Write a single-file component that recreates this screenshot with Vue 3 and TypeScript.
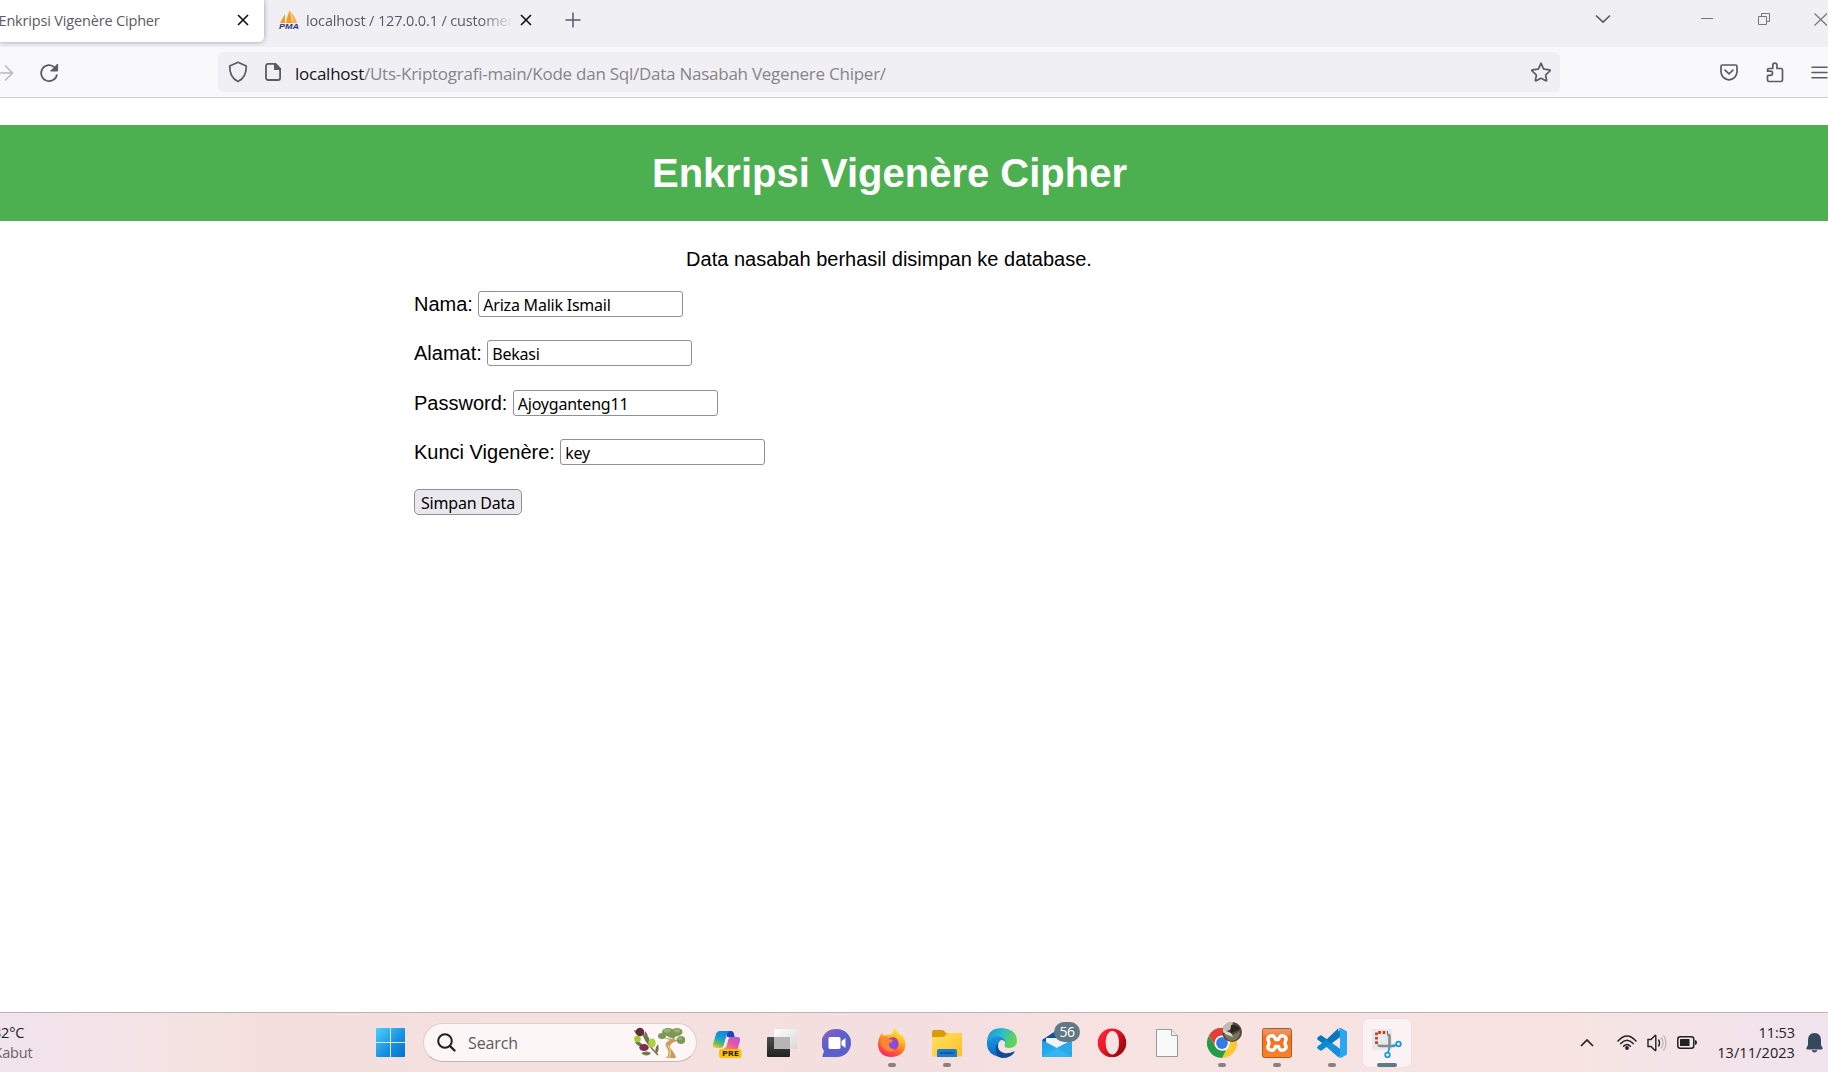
<script setup lang="ts">
import { ref } from 'vue'

interface Field {
  id: string
  label: string
  value: string
}

const fields = ref<Field[]>([
  { id: 'nama', label: 'Nama:', value: 'Ariza Malik Ismail' },
  { id: 'alamat', label: 'Alamat:', value: 'Bekasi' },
  { id: 'password', label: 'Password:', value: 'Ajoyganteng11' },
  { id: 'kunci', label: 'Kunci Vigenère:', value: 'key' },
])
</script>

<template>
  <div class="screen">
    <header class="tabs">
      <div class="tab active">
        <span class="tab-title first">Enkripsi Vigenère Cipher</span>
        <svg class="x" width="12" height="12" viewBox="0 0 12 12"><path d="M1 1l10 10M11 1L1 11" /></svg>
      </div>
      <div class="tab second-tab">
        <svg class="pma" width="21" height="20" viewBox="0 0 21 20">
          <path d="M1 13L6 4v9zM7 13c1-5 2-9 4-13l2 13z" fill="#f89c1c" />
          <path d="M13 13c1-3 0-7-1-11 3 3 5 7 6 11z" fill="#fbb24a" />
          <text x="0" y="19.3" textLength="20" lengthAdjust="spacingAndGlyphs">PMA</text>
        </svg>
        <span class="tab-title second">localhost / 127.0.0.1 / customer_</span>
        <svg class="x" width="12" height="12" viewBox="0 0 12 12"><path d="M1 1l10 10M11 1L1 11" /></svg>
      </div>
      <svg class="plus" width="16" height="16" viewBox="0 0 16 16"><path d="M8 .5v15M.5 8h15" /></svg>
      <div class="window-buttons">
        <svg width="16" height="10" viewBox="0 0 16 10"><path d="M1 1.500l7 6.500 7-6.500" stroke="#5b5b66" stroke-width="1.7" /></svg>
        <svg class="min" width="12" height="12" viewBox="0 0 12 12"><path d="M0 5.500h12" /></svg>
        <svg class="restore" width="12" height="12" viewBox="0 0 12 12"><path d="M.5 3.500h8v8h-8zM3.500 3.500V.5h8v8h-3" /></svg>
        <svg class="close" width="14" height="13" viewBox="0 0 14 13"><path d="M.5.5l12.500 12M13 .5L.5 12.500" stroke-width="1.200" /></svg>
      </div>
    </header>

    <nav class="toolbar">
      <svg class="forward" width="14" height="18" viewBox="0 0 14 18"><path d="M0 9h12.500M5 1.500L12.500 9 5 16.500" stroke="#b9b9bf" stroke-width="1.500" /></svg>
      <svg class="reload" width="20" height="20" viewBox="0 0 20 20"><path d="M18 11.500A8 8 0 1 1 15.800 4.500" stroke-width="1.700" /><path d="M18.600 1v7h-7z" fill="#5b5b66" /></svg>
      <div class="address">
        <svg width="20" height="22" viewBox="0 0 20 22"><path d="M10 1.300L18.300 5C18.500 11.500 16 17.500 10 20.600 4 17.500 1.500 11.500 1.700 5z" stroke-width="1.700" stroke-linejoin="round" /></svg>
        <svg class="page" width="16" height="18" viewBox="0 0 16 18"><path d="M3 .9h7.500l4.600 4.600V15a2 2 0 0 1-2 2H3a2 2 0 0 1-2-2V3A2 2 0 0 1 3 .9z" stroke-width="1.800" /><path d="M9.500 0L16 6.500H9.500z" fill="#5b5b66" /></svg>
        <span class="url"><b>localhost</b>/Uts-Kriptografi-main/Kode dan Sql/Data Nasabah Vegenere Chiper/</span>
        <svg class="star" width="22" height="20" viewBox="0 0 22 20"><path d="M11 1.200l2.300 5.200q.3.700 1 .8l5.200.6q1.300.3.400 1.200l-3.900 3.700q-.5.500-.3 1.200l.9 4.100q.2 1.100-.8.700L11.600 16.400q-.6-.3-1.200 0l-4.200 2.300q-1 .4-.8-.7l.9-4.100q.2-.7-.3-1.200L2.100 9q-.9-.9.400-1.200l5.200-.6q.7-.1 1-.8z" stroke-width="1.700" stroke-linejoin="round" /></svg>
      </div>
      <div class="tools">
        <svg width="18" height="17" viewBox="0 0 18 17"><path d="M2.500 1h13Q17 1 17 2.500v5.300a8 8 0 0 1-16 0V2.500Q1 1 2.500 1z" stroke-width="1.700" /><path d="M5 6.200l4 3.700 4-3.700" stroke-width="1.700" stroke-linecap="round" /></svg>
        <svg class="ext" width="18" height="21" viewBox="0 0 18 21"><path d="M1.500 13.300V18q0 1.500 1.500 1.500h12q1.500 0 1.500-1.500V8q0-1.500-1.500-1.500h-4V3.200a2 2 0 0 0-4.200 0v3.300H3Q1.500 6.500 1.500 8v1.200h3a2 2 0 0 1 0 4.100h-3" stroke-width="1.700" stroke-linejoin="round" /></svg>
        <svg class="menu" width="17" height="13" viewBox="0 0 17 13"><path d="M1 1.200h15M1 6.500h15M1 11.800h15" stroke-width="1.500" stroke-linecap="round" /></svg>
      </div>
    </nav>

    <main class="page-body">
      <h1><span>Enkripsi Vigenère Cipher</span></h1>
      <div class="content">
        <p>Data nasabah berhasil disimpan ke database.</p>
        <form @submit.prevent>
          <div v-for="field in fields" :key="field.id" class="field">
            <label :for="field.id">{{ field.label }}</label>
            <input :id="field.id" v-model="field.value" type="text" />
          </div>
          <button type="submit">Simpan Data</button>
        </form>
      </div>
    </main>

    <footer class="taskbar">
      <div class="weather"><span>32°C</span><span class="sub">Kabut</span></div>
      <svg class="start" width="29" height="29" viewBox="0 0 29 29">
        <defs>
          <linearGradient id="win" x2="1" y2="1"><stop stop-color="#4cd2ff" /><stop offset=".55" stop-color="#1793e3" /><stop offset="1" stop-color="#0070d0" /></linearGradient>
        </defs>
        <path d="M1 0h13v14H0V1q0-1 1-1zM15 0h13q1 0 1 1v13H15zM0 15h14v14H1q-1 0-1-1zM15 15h14v13q0 1-1 1H15z" fill="url(#win)" />
      </svg>
      <div class="search">
        <svg width="19" height="19" viewBox="0 0 19 19"><circle cx="8" cy="8" r="6.800" stroke="#222" stroke-width="2" /><path d="M13 13l4.500 4.500" stroke="#222" stroke-width="2.400" stroke-linecap="round" /></svg>
        <span>Search</span>
        <svg class="art" width="52" height="32" viewBox="0 0 52 32">
          <path d="M8 3q6 15 17 25" stroke="#8e6342" stroke-width="1.500" />
          <g fill="#667b4a">
            <path d="M1 3q5 0 6 6Q2 8 1 3zM12 4q5 5 1 11-3-5-1-11zM2 15q6-1 8 4-6 1-8-4zM25 17q2 7-2 10-2-5 2-10zM8 26q6-3 10 0-4 5-10 0zM14 10q3-2 2 7-4-2-2-7z" />
          </g>
          <circle cx="7" cy="5" r="4.200" fill="#632b40" /><circle cx="4.500" cy="12" r="3.300" fill="#a4cc32" />
          <ellipse cx="19" cy="16" rx="3.700" ry="4.600" fill="#abd33a" /><ellipse cx="11" cy="20.500" rx="4.700" ry="3.600" fill="#812b4e" />
          <path d="M33 31q5-4 0-12-2-3 4-6l-9-3 11 2 2-3 1 4 8-1-9 3q-6 3-3 7 5 6 5 9z" fill="#c79c59" />
          <path d="M36 31q3-6-1-13" stroke="#e8c98a" stroke-width="1.500" />
          <g fill="#7b9857"><ellipse cx="35" cy="5" rx="6" ry="4" /><ellipse cx="44" cy="5" rx="5.500" ry="4" /><ellipse cx="29" cy="9" rx="4" ry="3" /><ellipse cx="48" cy="13" rx="4.500" ry="4" /><ellipse cx="39" cy="8" rx="5" ry="3" /></g>
          <g fill="#98b26b"><ellipse cx="34" cy="3.500" rx="3.500" ry="2" /><ellipse cx="44" cy="3.500" rx="3" ry="2" /><ellipse cx="47" cy="11.500" rx="2.500" ry="1.500" /></g>
        </svg>
      </div>

      <div class="apps">
        <div class="app">
          <svg width="30" height="30" viewBox="0 0 30 30">
            <defs>
              <linearGradient id="cpA" x1=".6" y1="0" x2=".2" y2="1"><stop stop-color="#1683dd" /><stop offset=".45" stop-color="#16a3cf" /><stop offset=".75" stop-color="#67bd58" /><stop offset="1" stop-color="#efd11f" /></linearGradient>
              <linearGradient id="cpB" x1="1" y1="0" x2=".2" y2="1"><stop stop-color="#a05df5" /><stop offset=".5" stop-color="#e9569f" /><stop offset="1" stop-color="#ff9653" /></linearGradient>
            </defs>
            <path d="M14 3h5q2.500 0 3 3l.6 3H15z" fill="#1b46bd" />
            <path d="M8 3h10q-3 1-4 6l-2 8q-1 3-4 3H4q-4 0-3-4l3-10q1-3 4-3z" fill="url(#cpA)" />
            <path d="M18 9h7q4 0 3 4l-2 7q-1 3-5 3H9q3-1 4-4l2-7q1-3 3-3z" fill="url(#cpB)" />
            <path d="M14.500 9.500H17l-3 10h-3z" fill="#f4ecf1" />
            <rect x="7" y="21" width="22.500" height="9" rx="2" fill="#fdbf0b" />
            <text class="pre" x="10" y="28.300" textLength="17" lengthAdjust="spacingAndGlyphs">PRE</text>
          </svg>
        </div>
        <div class="app">
          <svg width="30" height="30" viewBox="0 0 30 30">
            <defs>
              <linearGradient id="tvA" x2="0" y2="1"><stop stop-color="#4d4d4b" /><stop offset="1" stop-color="#22231f" /></linearGradient>
              <linearGradient id="tvB" x2="1" y2="1"><stop stop-color="#fff" /><stop offset="1" stop-color="#d9d7d7" /></linearGradient>
            </defs>
            <rect y="9" width="23" height="20" rx="1" fill="url(#tvA)" /><rect x="7" y="1" width="23" height="20" rx="1" fill="url(#tvB)" /><path d="M7 9h16v12H8q-1 0-1-1z" fill="#b5b5b5" />
          </svg>
        </div>
        <div class="app">
          <svg width="30" height="30" viewBox="0 0 30 30">
            <defs><linearGradient id="chat" x2=".7" y2="1"><stop stop-color="#9265ba" /><stop offset=".5" stop-color="#5c5ed0" /><stop offset="1" stop-color="#5961c9" /></linearGradient></defs>
            <path d="M15 1a14 14 0 1 1 0 28H1q-1 0-.5-1L2 23A14 14 0 0 1 15 1z" fill="url(#chat)" /><rect x="6.500" y="9" width="12" height="12" rx="1.500" fill="#fff" /><path d="M19.500 13l4-3v10l-4-3z" fill="#fff" />
          </svg>
        </div>
        <div class="app running">
          <svg width="30" height="30" viewBox="0 0 30 30">
            <defs>
              <linearGradient id="ffA" x1=".8" y1="0" x2=".3" y2="1"><stop stop-color="#fff044" /><stop offset=".35" stop-color="#ffbc25" /><stop offset=".65" stop-color="#ff6b2b" /><stop offset="1" stop-color="#f82563" /></linearGradient>
              <radialGradient id="ffB"><stop stop-color="#7757f3" /><stop offset="1" stop-color="#9641d2" /></radialGradient>
            </defs>
            <path d="M5 5l2 3q3-2 6-1 3-1 4-7 3 2 4 5 5 2 7 7 3 15-13 17Q2 29 1 17 1 10 5 5z" fill="url(#ffA)" /><circle cx="15" cy="16" r="6.500" fill="url(#ffB)" /><path d="M4 10q5-3 8 1l4 1q-1 3-4 3-1 6 6 6-4 5-10 1-6-5-4-12z" fill="#ff852f" /><path d="M15 9q5 0 6 4l-3-1q-2 0-3-3z" fill="#c1447d" />
          </svg>
        </div>
        <div class="app running">
          <svg width="30" height="30" viewBox="0 0 30 30">
            <defs><linearGradient id="fold" x2="1" y2="1"><stop stop-color="#ffe06a" /><stop offset="1" stop-color="#ffc01e" /></linearGradient></defs>
            <path d="M2 2h8q2 0 4 3h14q2 0 2 2v8H0V4q0-2 2-2z" fill="#dc9a09" /><path d="M0 9h10q3 0 4-2.500Q15 5 17 5h11q2 0 2 2v20q0 1.500-1.500 1.500h-27Q0 28.500 0 27z" fill="url(#fold)" /><path d="M5 29v-6q0-2 2-2h16q2 0 2 2v6z" fill="#157fce" /><path d="M8 25h14" stroke="#074f97" stroke-width="1.500" />
          </svg>
        </div>
        <div class="app">
          <svg width="30" height="30" viewBox="0 0 30 30">
            <defs>
              <linearGradient id="edA" x2="1" y2=".4"><stop stop-color="#188fd8" /><stop offset=".5" stop-color="#2bbcce" /><stop offset="1" stop-color="#63d554" /></linearGradient>
              <linearGradient id="edB" x2=".2" y2="1"><stop stop-color="#1b9de2" /><stop offset="1" stop-color="#0866c8" /></linearGradient>
            </defs>
            <path d="M0 13Q1 0 15 0q14 1 15 12 0 8-8 8-6 0-4-4 1-6-6-6-8 0-12 5z" fill="url(#edA)" /><path d="M0 14q4-6 11-6 7 1 8 8-1-4-5-4-3 2-3 6 0 6 8 9-3 3-7 2Q-1 26 0 14z" fill="url(#edB)" /><path d="M11 17q-1 6 6 8 5 1 10-1.500l1-.3Q25 30 15 30q-5-1-6-7-1-4 2-8z" fill="#114b94" />
          </svg>
        </div>
        <div class="app">
          <svg width="30" height="30" viewBox="0 0 30 30">
            <defs><linearGradient id="mail" x2="1" y2="1"><stop stop-color="#189de4" /><stop offset="1" stop-color="#35bff2" /></linearGradient></defs>
            <path d="M0 12L15 2l15 10v9H0z" fill="#0953a4" /><path d="M4 10h22v5l-11 6L4 15z" fill="#f2f2f2" /><path d="M0 12l15 8 15-8v17H0z" fill="url(#mail)" /><path d="M15 20l15-8v17z" fill="#2aa8e9" /><path d="M0 29l15-9 15 9z" fill="#32b5f0" />
          </svg>
          <span class="badge">56</span>
        </div>
        <div class="app">
          <svg width="30" height="30" viewBox="0 0 30 30">
            <defs><linearGradient id="opera" x2=".9" y2=".6"><stop stop-color="#ff2840" /><stop offset=".5" stop-color="#ed1729" /><stop offset="1" stop-color="#a70812" /></linearGradient></defs>
            <path d="M15 .5a14.300 14.300 0 1 1 0 28.600 14.300 14.300 0 1 1 0-28.600zm.4 2.600c-4 0-6.700 5-6.700 11.700s2.700 11.700 6.700 11.700 6.600-5 6.600-11.700S19.400 3.100 15.400 3.100z" fill="url(#opera)" fill-rule="evenodd" />
          </svg>
        </div>
        <div class="app">
          <svg width="30" height="30" viewBox="0 0 30 30"><path d="M4.500 1.500h15l6 6v21h-21z" fill="#f8f9f9" stroke="#999" /><path d="M19.500 1.500v6h6" stroke="#999" fill="#eee" /></svg>
        </div>
        <div class="app running">
          <svg width="30" height="30" viewBox="0 0 30 30">
            <path d="M2 7.500a15 15 0 0 1 26 0H15z" fill="#e33e35" /><path d="M28 7.500A15 15 0 0 1 15 30l6.500-11.300Q24 14 20 7.500z" fill="#fdc72e" /><path d="M15 30A15 15 0 0 1 2 7.500l6.500 11.200q2 3.500 7 3.800l3.600-.1z" fill="#259b4a" /><path d="M15 7.500h13A15 15 0 0 0 2 7.500l6.500 11z" fill="#e33e35" /><circle cx="15" cy="15" r="7.500" fill="#fff" /><circle cx="15" cy="15" r="5.900" fill="#347bea" />
          </svg>
          <svg class="avatar" width="20" height="20" viewBox="0 0 20 20"><circle cx="10" cy="10" r="10" fill="#51493d" /><path d="M2 4Q6-1 11 0l-2 7-8 4Q0 7 2 4z" fill="#c5bdb5" /><path d="M9 3q7 0 9 4L8 12z" fill="#29251f" /><path d="M2 12l9 1 7-4q0 8-8 10-5 0-8-7z" fill="#7a775f" /><path d="M1 8l8 3 2 4-8-3z" fill="#ded8d0" /></svg>
        </div>
        <div class="app running">
          <svg width="30" height="30" viewBox="0 0 30 30">
            <defs><linearGradient id="xampp" x2="0" y2="1"><stop stop-color="#d8a080" /><stop offset=".2" stop-color="#f58643" /><stop offset=".3" stop-color="#f36f1e" /><stop offset="1" stop-color="#f98129" /></linearGradient></defs>
            <rect x=".5" y=".5" width="29" height="29" rx="2" fill="url(#xampp)" stroke="#b85719" />
            <path d="M9 7.800Q12.500 7 13.500 11.500H16.500Q17.500 7 21 7.800Q25.500 9 23.500 13Q22.500 15 23.500 17Q25.500 21 21 22.200Q17.500 23 16.500 18.500H13.500Q12.500 23 9 22.200Q4.500 21 6.500 17Q7.500 15 6.500 13Q4.500 9 9 7.800z" stroke="#fff" stroke-width="3.400" stroke-linejoin="round" />
          </svg>
        </div>
        <div class="app running">
          <svg width="30" height="30" viewBox="0 0 30 30"><path d="M0 10l3-2.500q1-.6 2 .2L23 21v7L1 12q-1-1-1-2z" fill="#0878bd" /><path d="M0 20l3 2.500q1 .6 2-.2L23 9V2L1 18q-1 1-1 2z" fill="#078dd6" /><path d="M21 .5L24 0l6 3.500v23L24 30l-3-1q2 0 2-2V3q0-2-2-2.500z" fill="#29a7f3" /><path d="M21 .5L9 12l5 3.500L23 9z" fill="#0878bd" /><path d="M9 18.500L21 29q2 0 2-2v-6l-9-6z" fill="#188fdb" /></svg>
        </div>
        <div class="app running current">
          <svg width="30" height="30" viewBox="0 0 30 30">
            <rect x="0" y="1" width="20" height="21" rx="1" fill="#e6e9eb" /><path d="M4.500 16V4.500H16" stroke="#cb3b16" stroke-width="2.800" stroke-dasharray="2.700 1.700" /><path d="M15 6.500q2.500 0 2.500 2V20M6.500 16.500q0 1.500 2 1.500H23" stroke="#868b8e" stroke-width="2.600" /><circle cx="26.500" cy="16" r="2.300" stroke="#179be0" stroke-width="1.800" /><circle cx="15.500" cy="27" r="2.300" stroke="#179be0" stroke-width="1.800" /><path d="M17.500 19.500L16 24.500M20 18l4.200-1" stroke="#179be0" stroke-width="1.800" />
          </svg>
        </div>
      </div>

      <div class="tray">
        <svg width="14" height="8" viewBox="0 0 14 8"><path d="M1 7l6-6 6 6" stroke="#222" stroke-width="1.700" /></svg>
        <svg class="wifi" width="20" height="15" viewBox="0 0 20 15"><path d="M1 6Q10-4 19 6M3.800 8.600q6.200-6.700 12.400 0M6.600 11.200q3.400-3.600 6.800 0" stroke="#222" stroke-width="1.500" stroke-linecap="round" /><circle cx="10" cy="13" r="1.900" fill="#222" /></svg>
        <svg class="volume" width="20" height="18" viewBox="0 0 20 18"><path d="M1 5.500h3l4-4q.8-.6.800.5v14q0 1-.8.500l-4-4H1z" stroke="#222" stroke-width="1.400" /><path d="M11.500 5.500q2 3.500 0 7" stroke="#222" stroke-width="1.400" /><path d="M14 3.500q4 5.500 0 11M16.500 1.500q5 7.500 0 15" stroke="#bdb5b9" stroke-width="1.300" /></svg>
        <svg class="battery" width="20" height="13" viewBox="0 0 20 13"><rect x=".8" y=".8" width="16" height="11.400" rx="2.500" stroke="#222" stroke-width="1.500" /><rect x="3" y="3" width="9.500" height="7" rx=".5" fill="#222" /><path d="M18 4q2 .3 2 2.500T18 9z" fill="#222" /></svg>
        <div class="clock"><span class="time">11:53</span><span class="date">13/11/2023</span></div>
        <svg class="bell" width="17" height="20" viewBox="0 0 17 20"><path d="M8.500 0q6.500.3 6.500 7v5l1.600 3q.4 1.400-1 1.400H1.400q-1.400 0-1-1.400L2 12V7q0-6.700 6.500-7zM5.500 17.200h6q-1 2.300-3 2.300t-3-2.300z" fill="#34495b" /></svg>
      </div>
    </footer>
  </div>
</template>

<style>
body {
  overflow: hidden;
}
</style>

<style scoped>
.screen {
  width: 1828px;
  height: 1072px;
  display: flex;
  flex-direction: column;
  background: #fff;
  overflow: hidden;
  font-family: 'Open Sans', 'Noto Sans', sans-serif;
}
svg {
  display: block;
  flex: none;
  fill: none;
  stroke: none;
}
.tabs svg,
.toolbar svg {
  stroke: #5b5b66;
}
.tabs {
  height: 47px;
  flex: none;
  display: flex;
  background: #f0eff4;
  overflow: hidden;
}
.tab {
  display: flex;
  align-items: center;
  height: 42px;
  box-sizing: border-box;
  font-size: 14.500px;
  color: #5b5b66;
}
.active {
  width: 264px;
  justify-content: space-between;
  padding-right: 15px;
  border-radius: 0 0 5px 0;
  background: #fff;
  box-shadow: 0 0 5px rgba(0, 0, 0, 0.35);
}
.tab-title {
  white-space: nowrap;
  overflow: hidden;
  line-height: 24px;
}
.first {
  margin-left: -1.500px;
  letter-spacing: -0.17px;
}
.second {
  width: 207px;
  margin-left: 6px;
  letter-spacing: -0.14px;
  mask-image: linear-gradient(90deg, #000 175px, transparent 207px);
}
.second-tab {
  padding-left: 15px;
}
.tabs .x {
  stroke: #111;
  stroke-width: 1.600;
  margin-top: -2px;
}
.second-tab .x {
  margin-left: 7px;
}
.tabs .pma {
  stroke: none;
  margin-top: -3px;
}
.pma text {
  font: italic bold 8px 'Liberation Sans', sans-serif;
  fill: #34347a;
}
.plus {
  margin: 12px 0 0 33px;
  stroke-width: 1.500;
}
.window-buttons {
  display: flex;
  margin-left: auto;
  padding: 13px 0 0;
}
.window-buttons svg:first-child {
  margin-top: 1px;
}
.window-buttons svg:not(:first-child) {
  stroke: #77777b;
}
.min {
  margin-left: 90px;
}
.restore {
  margin-left: 45px;
}
.close {
  margin-left: 44px;
}
.toolbar {
  flex: none;
  height: 51px;
  box-sizing: border-box;
  display: flex;
  align-items: center;
  background: #f9f9fb;
  border-bottom: 1px solid #ccccd0;
}
.forward,
.reload {
  position: relative;
  top: 0.5px;
}
.reload {
  margin-left: 25px;
}
.address {
  width: 1342px;
  height: 40px;
  box-sizing: border-box;
  margin-left: 159px;
  padding: 0 8px 0 10px;
  display: flex;
  align-items: center;
  border-radius: 5px;
  background: #f0eff4;
}
.page {
  margin-left: 17px;
}
.url {
  margin: 2px 0 0 14px;
  font-size: 17px;
  letter-spacing: -0.25px;
  color: #85858b;
  white-space: nowrap;
}
.url b {
  font-weight: 400;
  color: #15141a;
}
.star {
  margin-left: auto;
}
.tools {
  margin-left: 160px;
  display: flex;
  align-items: center;
}
.ext {
  margin-left: 28px;
}
.menu {
  margin-left: 27px;
}
.page-body {
  flex: 1;
  min-height: 0;
  padding-top: 27px;
  font-family: 'Liberation Sans', Arial, sans-serif;
  font-size: 20px;
  color: #000;
}
h1 {
  margin: 0;
  height: 96px;
  box-sizing: border-box;
  padding: 25px 49px 25px 0;
  background: #4caf50;
  color: #fff;
  font-size: 40px;
  line-height: 46px;
  text-align: center;
}
.content {
  width: 950px;
  margin-left: 414px;
}
p {
  margin: 0;
  padding-top: 27px;
  line-height: 23px;
  text-align: center;
}
form {
  padding-top: 19.800px;
}
.field {
  height: 49.500px;
  display: flex;
  align-items: flex-start;
  line-height: 26px;
}
input {
  width: 205px;
  height: 26px;
  box-sizing: border-box;
  margin: 0 0 0 5.400px;
  padding: 2px 4px 0;
  border: 1px solid #8f8f9d;
  border-radius: 3px;
  background: #fff;
  color: #000;
  font: 16px 'Noto Sans', sans-serif;
  letter-spacing: -0.22px;
  outline: none;
}
button {
  display: block;
  width: 108px;
  height: 26px;
  box-sizing: border-box;
  padding: 2px 0 0;
  border: 1px solid #8f8f9d;
  border-radius: 5px;
  background: #e9e9ed;
  color: #000;
  font: 16px/22px 'Noto Sans', sans-serif;
  letter-spacing: -0.2px;
  white-space: nowrap;
}
.taskbar {
  flex: none;
  height: 60px;
  box-sizing: border-box;
  border-top: 1px solid #bfb1b5;
  display: flex;
  align-items: center;
  background: linear-gradient(90deg, #f1e4ed 0, #f4e3e8 100px, #f4e2e1 200px, #f3dfdd 290px, #f4e1df 500px, #f3dfdf 900px, #f7e3e2 1200px, #f7e4e1 1560px, #f4e4e8 1680px, #f1e4ee 1828px);
}
.weather {
  width: 376px;
  display: flex;
  flex-direction: column;
  font-size: 14.500px;
  line-height: 20px;
  letter-spacing: -0.2px;
  color: #222;
}
.weather span {
  margin-left: -7px;
}
.weather .sub {
  color: #666;
  margin-left: -6.500px;
}
.search {
  width: 274px;
  height: 39px;
  box-sizing: border-box;
  margin-left: 18px;
  padding: 0 11.500px 0 12.500px;
  display: flex;
  align-items: center;
  border: 1px solid #decfd0;
  border-bottom-color: #c5b5b6;
  border-radius: 20px;
  background: #fcf6f6;
}
.search span {
  margin-left: 12.500px;
  font-size: 16px;
  letter-spacing: -0.1px;
  color: #5d5a5b;
}
.art {
  margin-left: auto;
}
.apps {
  display: flex;
  margin-left: 2px;
}
.app {
  position: relative;
  width: 55px;
  height: 48px;
  display: flex;
  align-items: center;
  justify-content: center;
}
.running::after {
  content: '';
  position: absolute;
  left: 23.500px;
  bottom: 0;
  width: 8px;
  height: 4px;
  border-radius: 2px;
  background: #8b8080;
}
.current {
  width: 48px;
  margin-left: 4px;
  border-radius: 5px;
  background: #fbf3f3;
  box-shadow: 0 0 1px #cdbcbc;
}
.current::after {
  left: 14px;
  width: 20px;
  background: #5d7a87;
}
.badge {
  position: absolute;
  left: 25px;
  top: 3px;
  width: 26px;
  height: 20px;
  border-radius: 10px;
  background: #607984;
  color: #fff;
  font-size: 14px;
  line-height: 20px;
  text-align: center;
  letter-spacing: -0.5px;
}
.avatar {
  position: absolute;
  left: 28px;
  top: 3px;
}
.pre {
  font: bold 7px 'Open Sans', sans-serif;
  fill: #1d1b05;
}
.tray {
  margin-left: auto;
  padding-right: 5px;
  display: flex;
  align-items: center;
}
.wifi {
  margin-left: 23px;
}
.volume {
  margin-left: 10px;
}
.battery {
  margin-left: 10px;
}
.clock {
  width: 98px;
  display: flex;
  flex-direction: column;
  align-items: flex-end;
  font-size: 14.500px;
  line-height: 20px;
  color: #222;
}
.time {
  letter-spacing: -0.1px;
}
.date {
  letter-spacing: 0.08px;
}
.bell {
  margin-left: 11px;
}
</style>
